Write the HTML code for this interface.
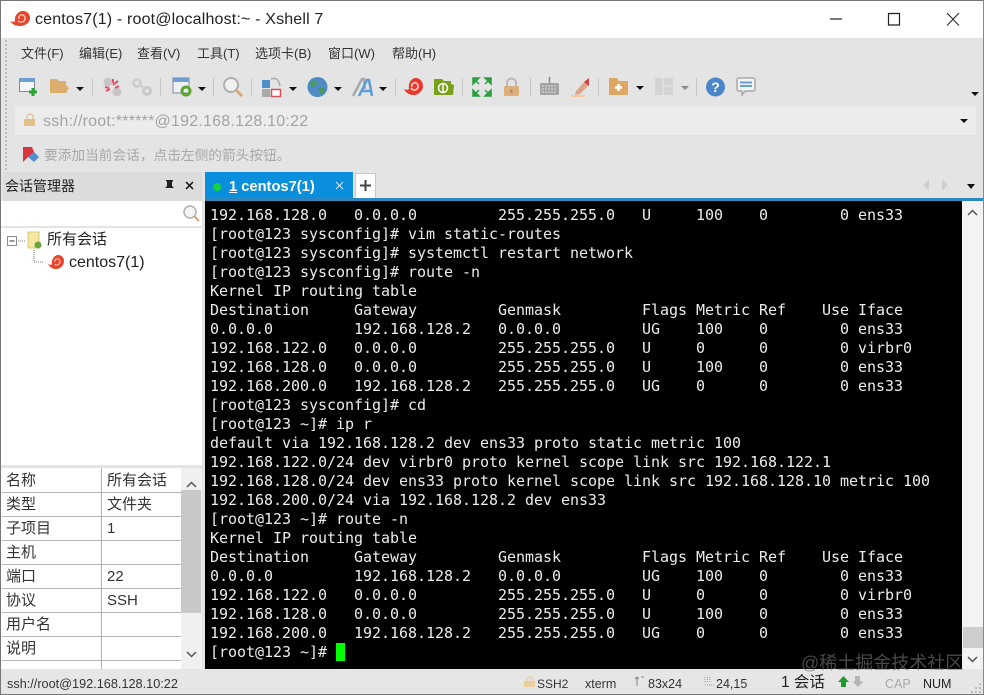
<!DOCTYPE html>
<html><head><meta charset="utf-8"><style>
html,body{margin:0;padding:0}
body{width:984px;height:695px;position:relative;overflow:hidden;background:#e4e4e4;font-family:"Liberation Sans","Noto Sans CJK SC",sans-serif;color:#222;filter:blur(.3px)}
.a{position:absolute;white-space:pre}
svg{position:absolute;overflow:visible}
.m{position:absolute;top:45px;font-size:13px;line-height:18px;color:#333;white-space:pre}
.sep{position:absolute;top:78px;width:1px;height:18px;background:#c4c4c4}
.dd{position:absolute;width:0;height:0;border-left:4px solid transparent;border-right:4px solid transparent;border-top:4px solid #111}
#t{position:absolute;left:210px;top:206px;margin:0;font:15px/19px "DejaVu Sans Mono",monospace;color:#ececec;letter-spacing:-.03px;white-space:pre}
.r{position:absolute;left:1px;width:179px;height:23px;border-bottom:1px solid #b4b4b4;font-size:15px;line-height:23px;color:#333}
.r span{position:absolute;left:4px;top:0}.r b{position:absolute;left:105px;top:0;font-weight:normal}
.s{position:absolute;top:675px;font-size:13px;line-height:17px;color:#333;white-space:pre}
</style></head><body>
<div class="a" style="left:0;top:0;width:984px;height:38px;background:#fff"></div>
<div class="a" style="left:0;top:0;width:984px;height:1px;background:#777"></div>
<div class="a" style="left:0;top:0;width:1px;height:695px;background:#777"></div>
<div class="a" style="left:983px;top:0;width:1px;height:695px;background:#888"></div>
<div class="a" style="left:0;top:694px;width:984px;height:1px;background:#777"></div>
<svg style="left:10px;top:10px" width="20" height="18" viewBox="0 0 20 18"><path d="M0 11c3 1 4 1 5 0C4 5 9 1 13 1c4 0 7 3 7 7 0 5-5 8-10 8-5 0-8-2-10-5z" fill="#e5452f"/><path d="M9 9c-1-3 2-5 4-4s3 4 1 6-5 1-6 0" fill="none" stroke="#fbc9b8" stroke-width="1.3"/></svg>
<div class="a" style="left:35px;top:10px;font-size:16px;line-height:20px;letter-spacing:.17px;color:#222">centos7(1) - root@localhost:~ - Xshell 7</div>
<svg style="left:0;top:0" width="984" height="38"><path d="M830 19h12" stroke="#222" stroke-width="1.200" fill="none"/><path d="M888.500 13.500h11v11.500h-11z" stroke="#222" stroke-width="1.200" fill="none"/><path d="M947 13l12 12.500M959 13l-12 12.500" stroke="#222" fill="none"/></svg>
<div class="a" style="left:5px;top:40px;width:1px;height:130px;border-left:2px dotted #bbb"></div>

<div class="m" style="left:21px">文件(F)</div><div class="m" style="left:79px">编辑(E)</div><div class="m" style="left:137px">查看(V)</div><div class="m" style="left:197px">工具(T)</div><div class="m" style="left:255px">选项卡(B)</div><div class="m" style="left:328px">窗口(W)</div><div class="m" style="left:392px">帮助(H)</div>

<svg style="left:18px;top:77px" width="22" height="20"><rect x="1.500" y="1.500" width="15" height="13" fill="#f4f6f8" stroke="#7d8a98"/><rect x="1" y="1" width="16" height="4" fill="#6f9fd0"/><path d="M15 11v8M11 15h8" stroke="#27a52f" stroke-width="3"/></svg>
<svg style="left:50px;top:78px" width="20" height="17"><path d="M0 1h7l2 2h7v4l3 3-3 5H0z" fill="#dcae6d"/></svg>
<div class="dd" style="left:76px;top:87px"></div><div class="sep" style="left:92px"></div>
<svg style="left:102px;top:77px" width="22" height="20"><circle cx="6" cy="5" r="4.500" fill="#c6c6c6"/><circle cx="15" cy="15" r="4.500" fill="#c6c6c6"/><circle cx="15" cy="5" r="2" fill="#d9d9d9"/><path d="M4 14l4-2M11 8l5-4M3 10l4 1M11 2v4M13 11l4-2" stroke="#e2516a" stroke-width="2"/></svg>
<svg style="left:132px;top:78px" width="21" height="18"><circle cx="5" cy="5" r="3.500" fill="none" stroke="#cfcfcf" stroke-width="3"/><circle cx="15" cy="13" r="3.500" fill="none" stroke="#c8c8c8" stroke-width="3"/><path d="M8 7l5 4" stroke="#ccc" stroke-width="2"/></svg>
<div class="sep" style="left:160px"></div>
<svg style="left:172px;top:77px" width="22" height="20"><rect x="1" y="1" width="16" height="15" fill="#eef1f4" stroke="#7c8a99"/><rect x="1" y="1" width="16" height="4" fill="#6f9fd0"/><circle cx="14" cy="14" r="4" fill="none" stroke="#5aa62c" stroke-width="3"/></svg>
<div class="dd" style="left:198px;top:87px"></div><div class="sep" style="left:213px"></div>
<svg style="left:222px;top:77px" width="22" height="20"><circle cx="9" cy="8" r="7" fill="#f1f1f1" stroke="#aeaeae" stroke-width="2"/><path d="M14 13l6 6" stroke="#d7a877" stroke-width="3"/></svg>
<div class="sep" style="left:251px"></div>
<svg style="left:261px;top:77px" width="22" height="20"><rect x="1" y="3" width="8" height="8" fill="#4d8fc9"/><rect x="1" y="12" width="8" height="8" fill="#a9a9a9"/><rect x="10.500" y="12.500" width="9" height="7" fill="#fff" stroke="#d8505a" stroke-width="1.500"/><path d="M10 2c5-2 8 1 9 7" fill="none" stroke="#aaa" stroke-width="1.500"/></svg>
<div class="dd" style="left:289px;top:87px"></div>
<svg style="left:307px;top:77px" width="21" height="20"><circle cx="10.500" cy="10" r="10" fill="#4e8bc4"/><path d="M3 6c3-3 6-3 8-1 0 3-3 2-4 5-2 0-4-1-4-4zM12 11c3-1 5 0 6 1-1 3-3 5-5 5 0-2-2-4-1-6z" fill="#4c9a55"/></svg>
<div class="dd" style="left:334px;top:87px"></div>
<svg style="left:352px;top:77px" width="22" height="20"><path d="M1 19L10 2h2l1 10" fill="none" stroke="#a9a9a9" stroke-width="2.500"/><path d="M7 19L15 3h2l3 16M10 14h9" fill="none" stroke="#5b9bd8" stroke-width="2.500"/></svg>
<div class="dd" style="left:379px;top:87px"></div><div class="sep" style="left:395px"></div>
<svg style="left:403px;top:77px" width="21" height="20"><path d="M1 12c3 1 3 1 5 0C5 5 9 1 13 1c4 0 7 4 7 8 0 5-5 9-9 9-5 0-8-2-10-6z" fill="#e8392c"/><path d="M9 10c-1-3 2-5 4-4s3 4 1 6-5 1-6-1" fill="none" stroke="#fcd3c6" stroke-width="1.500"/></svg>
<svg style="left:434px;top:78px" width="21" height="18"><path d="M0 1h8l2 2h7v3l3 1-1 10H0z" fill="#7aa11a"/><circle cx="9" cy="10" r="4.500" fill="none" stroke="#fff" stroke-width="1.500"/><path d="M9 6v8" stroke="#fff" stroke-width="1.500"/></svg>
<div class="sep" style="left:462px"></div>
<svg style="left:472px;top:77px" width="20" height="20"><path d="M1 1h6L1 7zM19 1h-6l6 6zM1 19h6l-6-6zM19 19h-6l6-6zM3 3l4 4M17 3l-4 4M3 17l4-4M17 17l-4-4" fill="#2b9f3e" stroke="#2b9f3e" stroke-width="1.500"/></svg>
<svg style="left:503px;top:77px" width="17" height="20"><path d="M4 9V6a4.500 4.500 0 0 1 9 0v3" fill="none" stroke="#b9b9b9" stroke-width="2"/><rect x="1" y="9" width="15" height="10" rx="1" fill="#dcb27a"/><rect x="7.500" y="12" width="2" height="4" fill="#b78c52"/></svg>
<div class="sep" style="left:530px"></div>
<svg style="left:540px;top:77px" width="20" height="19"><path d="M9.500 0v7" stroke="#888" stroke-width="1.500"/><rect x="0" y="6" width="19" height="12" rx="1.500" fill="#a3a3a3"/><path d="M2 9h15M2 12h15M2 15h15" stroke="#dedede" stroke-dasharray="2 1"/></svg>
<svg style="left:569px;top:77px" width="22" height="20"><path d="M7 14L16 4l4 4-9 9-5 1z" fill="#dca488"/><path d="M15 5l5-4v8z" fill="#d63c48"/><path d="M2 19h14" stroke="#f3c99a" stroke-width="2"/></svg>
<div class="sep" style="left:598px"></div>
<svg style="left:609px;top:78px" width="20" height="18"><path d="M0 0h8l2 3h9v14H0z" fill="#dfa766"/><path d="M9.500 6v7M6 9.500h7" stroke="#fff" stroke-width="2.500"/></svg>
<div class="dd" style="left:636px;top:86px"></div>
<svg style="left:655px;top:78px" width="18" height="17"><rect width="18" height="17" fill="#d3d3d3"/><path d="M8 0v17M8 8h10" stroke="#e2e2e2" stroke-width="1.500"/></svg>
<div class="dd" style="left:681px;top:86px;border-top-color:#888"></div><div class="sep" style="left:696px"></div>
<svg style="left:706px;top:77px" width="19" height="20"><circle cx="9.500" cy="10" r="9.500" fill="#4b86cc"/><text x="9.500" y="15" font-size="14" font-weight="bold" fill="#fff" text-anchor="middle" font-family="Liberation Sans">?</text></svg>
<svg style="left:736px;top:77px" width="20" height="20"><path d="M3 1h14a2 2 0 0 1 2 2v9a2 2 0 0 1-2 2H9l-3 4v-4H3a2 2 0 0 1-2-2V3a2 2 0 0 1 2-2z" fill="#f3f3f3" stroke="#a8a8a8" stroke-width="1.500"/><path d="M4 5.500h12M4 9h12" stroke="#68a2d9" stroke-width="2"/></svg>
<div class="dd" style="left:971px;top:92px"></div>

<div class="a" style="left:15px;top:106px;width:961px;height:29px;background:#ececec"></div>
<svg style="left:24px;top:114px" width="12" height="12"><path d="M3 5V3a3 3 0 0 1 6 0v2" fill="none" stroke="#e3c79a" stroke-width="1.500"/><rect x="0" y="5" width="11" height="7" rx="1" fill="#e2c08a"/></svg>
<div class="a" style="left:43px;top:113px;font-size:16px;line-height:18px;letter-spacing:.23px;color:#a4a4a4">ssh://root:******@192.168.128.10:22</div>
<div class="dd" style="left:960px;top:119px"></div>
<svg style="left:22px;top:146px" width="18" height="17"><path d="M1 1h9l2 5-6 5-5 5z" fill="#d8343c"/><path d="M6 11l6-5 5 5-5 5z" fill="#4f8fd0"/></svg>
<div class="a" style="left:44px;top:147px;font-size:13.700px;line-height:18px;color:#a8a8a8">要添加当前会话，点击左侧的箭头按钮。</div>

<div class="a" style="left:3px;top:172px;width:199px;height:29px;background:#dcdcdc"></div>
<div class="a" style="left:5px;top:177px;font-size:14px;line-height:18px;color:#222">会话管理器</div>
<svg style="left:165px;top:180px" width="30" height="12"><path d="M1 0h7v1l-1 1v4l2 2H0l2-2V2L1 1zM4.500 8v4" fill="#222"/><path d="M21 2l7 7M28 2l-7 7" stroke="#111" stroke-width="1.500"/></svg>
<div class="a" style="left:1px;top:201px;width:201px;height:25px;background:#fff"></div>
<svg style="left:183px;top:205px" width="17" height="17"><circle cx="7" cy="7" r="6" fill="#f4f4f4" stroke="#b0b0b0" stroke-width="1.500"/><path d="M11 11l5 5" stroke="#d7a877" stroke-width="2"/></svg>
<div class="a" style="left:1px;top:226px;width:201px;height:2px;background:#e4e4e4"></div>
<div class="a" style="left:1px;top:228px;width:201px;height:237px;background:#fff"></div>
<svg style="left:7px;top:232px" width="44" height="34"><rect x=".500" y="4.500" width="9" height="9" fill="#fff" stroke="#8a8a8a"/><path d="M2.500 9h5" stroke="#333"/><path d="M11 9h8M27 18v12h10" stroke="#777" stroke-dasharray="1 1" fill="none"/><path d="M21 0h11v16H21z" fill="#f7e7a0" stroke="#d8c878"/><circle cx="31" cy="13" r="3.500" fill="#6aa63a"/></svg>
<div class="a" style="left:47px;top:230px;font-size:15px;line-height:19px;color:#222">所有会话</div>
<svg style="left:48px;top:254px" width="17" height="16"><path d="M0 10c3 1 3 1 4 0C3 5 7 1 10 1c4 0 6 3 6 6 0 5-4 8-8 8-4 0-6-2-8-5z" fill="#e5452f"/><path d="M7 8c-1-2 1-4 3-3s3 3 1 5-4 1-4 0" fill="none" stroke="#fbc9b8"/></svg>
<div class="a" style="left:69px;top:253px;font-size:16px;line-height:19px;color:#222">centos7(1)</div>

<div class="a" style="left:1px;top:465px;width:201px;height:3px;background:#e4e4e4"></div>
<div class="a" style="left:1px;top:468px;width:201px;height:201px;background:#fff;overflow:hidden">
<div class="r" style="top:1px"><span>名称</span><b>所有会话</b></div>
<div class="r" style="top:25px"><span>类型</span><b>文件夹</b></div>
<div class="r" style="top:49px"><span>子项目</span><b>1</b></div>
<div class="r" style="top:73px"><span>主机</span></div>
<div class="r" style="top:97px"><span>端口</span><b>22</b></div>
<div class="r" style="top:121px"><span>协议</span><b>SSH</b></div>
<div class="r" style="top:145px"><span>用户名</span></div>
<div class="r" style="top:169px"><span>说明</span></div>
<div class="a" style="left:100px;top:0;width:1px;height:201px;background:#b4b4b4"></div>
<div class="a" style="left:180px;top:0;width:21px;height:201px;background:#f0f0f0"></div>
<div class="a" style="left:180px;top:22px;width:20px;height:123px;background:#c8c8c8"></div>
<svg style="left:185px;top:13px" width="11" height="7"><path d="M1 6l4.500-4.500L10 6" fill="none" stroke="#555" stroke-width="1.500"/></svg>
<svg style="left:185px;top:183px" width="11" height="7"><path d="M1 1l4.500 4.500L10 1" fill="none" stroke="#555" stroke-width="1.500"/></svg>
</div>

<div class="a" style="left:205px;top:172px;width:148px;height:29px;background:#0a8fdc"></div>
<div class="a" style="left:213px;top:183px;width:8px;height:8px;border-radius:50%;background:#11d43a"></div>
<div class="a" style="left:229px;top:178px;font-size:14.700px;font-weight:bold;line-height:18px;color:#fff"><u>1</u> centos7(1)</div>
<svg style="left:335px;top:181px" width="9" height="9"><path d="M1 1l7 7M8 1l-7 7" stroke="#cde9fa"/></svg>
<div class="a" style="left:355px;top:173px;width:19px;height:25px;background:#fdfdfd;border:1px solid #c8c8c8;border-bottom:0"></div>
<svg style="left:360px;top:180px" width="11" height="11"><path d="M5.500 0v11M0 5.500h11" stroke="#444" stroke-width="2"/></svg>
<svg style="left:922px;top:179px" width="26" height="13"><path d="M7 0v12L1 6z" fill="#cfcfcf"/><path d="M20 0v12l6-6z" fill="#cfcfcf"/></svg>
<div class="dd" style="left:967px;top:184px;border-left-width:4.500px;border-right-width:4.500px;border-top-width:5px"></div>

<div class="a" style="left:205px;top:198px;width:778px;height:3px;background:#2d87bf"></div>
<div class="a" style="left:205px;top:172px;width:148px;height:29px;background:#0a8fdc;display:none"></div>
<div class="a" style="left:205px;top:201px;width:757px;height:468px;background:#000"></div>
<div class="a" style="left:962px;top:201px;width:21px;height:468px;background:#f3f3f3"></div>
<svg style="left:967px;top:209px" width="11" height="7"><path d="M1 6l4.500-4.500L10 6" fill="none" stroke="#555" stroke-width="1.500"/></svg>
<div class="a" style="left:963px;top:627px;width:20px;height:21px;background:#cdcdcd"></div>
<svg style="left:967px;top:656px" width="11" height="7"><path d="M1 1l4.500 4.500L10 1" fill="none" stroke="#555" stroke-width="1.500"/></svg>
<pre id="t">192.168.128.0   0.0.0.0         255.255.255.0   U     100    0        0 ens33
[root@123 sysconfig]# vim static-routes
[root@123 sysconfig]# systemctl restart network
[root@123 sysconfig]# route -n
Kernel IP routing table
Destination     Gateway         Genmask         Flags Metric Ref    Use Iface
0.0.0.0         192.168.128.2   0.0.0.0         UG    100    0        0 ens33
192.168.122.0   0.0.0.0         255.255.255.0   U     0      0        0 virbr0
192.168.128.0   0.0.0.0         255.255.255.0   U     100    0        0 ens33
192.168.200.0   192.168.128.2   255.255.255.0   UG    0      0        0 ens33
[root@123 sysconfig]# cd
[root@123 ~]# ip r
default via 192.168.128.2 dev ens33 proto static metric 100
192.168.122.0/24 dev virbr0 proto kernel scope link src 192.168.122.1
192.168.128.0/24 dev ens33 proto kernel scope link src 192.168.128.10 metric 100
192.168.200.0/24 via 192.168.128.2 dev ens33
[root@123 ~]# route -n
Kernel IP routing table
Destination     Gateway         Genmask         Flags Metric Ref    Use Iface
0.0.0.0         192.168.128.2   0.0.0.0         UG    100    0        0 ens33
192.168.122.0   0.0.0.0         255.255.255.0   U     0      0        0 virbr0
192.168.128.0   0.0.0.0         255.255.255.0   U     100    0        0 ens33
192.168.200.0   192.168.128.2   255.255.255.0   UG    0      0        0 ens33
[root@123 ~]#</pre>
<div class="a" style="left:336px;top:643px;width:9px;height:18px;background:#0f0"></div>

<div class="a" style="left:1px;top:669px;width:982px;height:25px;background:#e6e6e6;overflow:hidden"></div>
<div class="s" style="left:7px;top:676px;font-size:12.700px">ssh://root@192.168.128.10:22</div>
<svg style="left:524px;top:677px" width="12" height="10"><path d="M3 4V3a3 3 0 0 1 6 0v1" fill="none" stroke="#eccf9e" stroke-width="1.500"/><rect x="0" y="4" width="11" height="6" fill="#eccf9e"/></svg>
<div class="s" style="left:537px;top:676px;font-size:12px">SSH2</div>
<div class="s" style="left:585px;top:676px;font-size:12.500px">xterm</div>
<svg style="left:635px;top:676px" width="10" height="10"><path d="M2 10V1M0 3l2-2 2 2M6 1h3" fill="none" stroke="#888"/></svg>
<div class="s" style="left:648px;top:676px;font-size:12.500px">83x24</div>
<svg style="left:704px;top:677px" width="10" height="9"><path d="M1 0v6M3.500 0v6M6 0v6M1 8h9" stroke="#999" stroke-dasharray="1 1"/></svg>
<div class="s" style="left:716px;top:676px;font-size:12.500px">24,15</div>
<div class="s" style="left:781px;top:673px;font-size:15.500px;line-height:20px;color:#222">1 会话</div>
<svg style="left:838px;top:676px" width="30" height="12"><path d="M5.500 0l5.500 6H8v5H3V6H0z" fill="#1f9a2c"/><path d="M21 11l5.500-5.500H23V0h-5v5.500h-2.500z" fill="#b5b5b5" transform="translate(-1 0)"/></svg>
<div class="s" style="left:885px;top:676px;font-size:12.500px;color:#a8a8a8">CAP</div>
<div class="s" style="left:923px;top:676px;font-size:12.500px;color:#222">NUM</div>
<svg style="left:971px;top:682px" width="11" height="11"><path d="M8 1h2v2H8zM4 5h2v2H4zM8 5h2v2H8zM0 9h2v2H0zM4 9h2v2H4zM8 9h2v2H8z" fill="#bdbdbd"/></svg>
<div class="a" style="left:801px;top:651px;font-size:18px;line-height:24px;color:#777;opacity:.62">@稀土掘金技术社区</div>
</body></html>
